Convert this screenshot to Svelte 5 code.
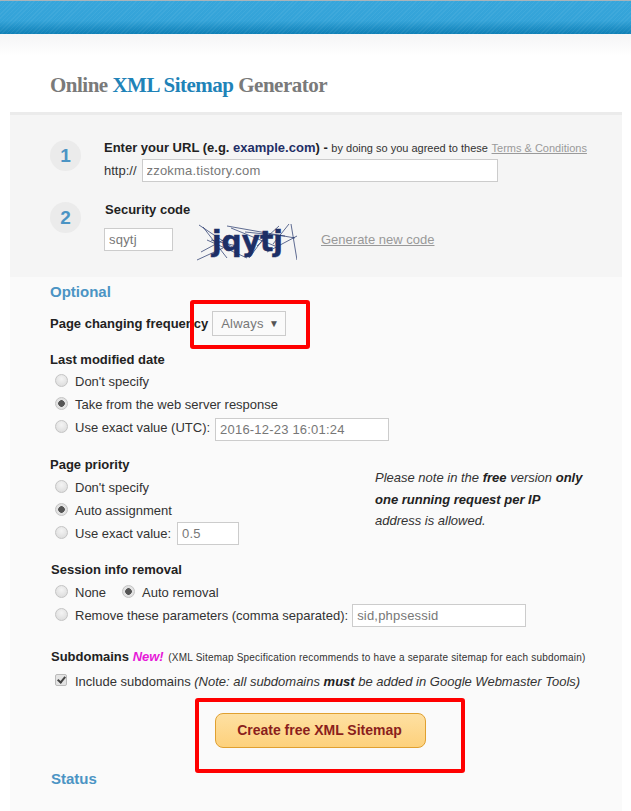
<script>
  let url = 'zzokma.tistory.com';
  let code = 'sqytj';
  let lastmod = '2016-12-23 16:01:24';
  let priority = '0.5';
  let params = 'sid,phpsessid';
  let freq = 'Always';

  const noise = [
    [2, 3, 38, 27], [6, 5, 30, 36], [4, 30, 30, 16], [0, 38, 26, 26], [14, 18, 40, 24],
    [30, 4, 98, 16], [34, 6, 78, 24], [48, 10, 88, 14], [60, 24, 82, 4], [76, 22, 92, 2],
    [94, 2, 100, 38], [52, 36, 70, 12], [10, 18, 28, 26], [28, 26, 50, 36], [70, 30, 100, 14]
  ];
</script>

<div class="page">
  <header class="topbar"></header>
  <div class="topfade"></div>

  <h1 class="title">Online <span>XML Sitemap</span> Generator</h1>

  <main class="panel">
    <section class="steps">
      <div class="step step-url">
        <div class="num">1</div>
        <div class="step-body">
          <div class="url-label">
            <b>Enter your URL (e.g. <span class="eg">example.com</span>) -</b>
            <small>by doing so you agreed to these</small>
            <a href="#terms" class="terms">Terms &amp; Conditions</a>
          </div>
          <div class="url-row">
            <span>http://</span>
            <input class="field url" bind:value={url} />
          </div>
        </div>
      </div>

      <div class="step step-code">
        <div class="num">2</div>
        <div class="step-body">
          <div class="code-label"><b>Security code</b></div>
          <div class="code-row">
            <input class="field code" bind:value={code} />
            <div class="captcha">
              <span>jqytj</span>
              <svg viewBox="0 0 100 40" width="100" height="40">
                {#each noise as n}
                  <line x1={n[0]} y1={n[1]} x2={n[2]} y2={n[3]} />
                {/each}
              </svg>
            </div>
            <a href="#new" class="newcode">Generate new code</a>
          </div>
        </div>
      </div>
    </section>

    <section class="options">
      <h2>Optional</h2>

      <div class="freq">
        <b>Page changing frequency</b>
        <div class="select"><span>{freq}</span><i>▼</i></div>
      </div>

      <h3>Last modified date</h3>
      <label class="row"><input type="radio" name="lm" /><span>Don't specify</span></label>
      <label class="row"><input type="radio" name="lm" checked /><span>Take from the web server response</span></label>
      <label class="row">
        <input type="radio" name="lm" /><span>Use exact value (UTC):</span>
        <input class="field stamp" bind:value={lastmod} />
      </label>

      <div class="priority">
        <div class="priority-left">
          <h3 class="gap">Page priority</h3>
          <label class="row"><input type="radio" name="pp" /><span>Don't specify</span></label>
          <label class="row"><input type="radio" name="pp" checked /><span>Auto assignment</span></label>
          <label class="row">
            <input type="radio" name="pp" /><span>Use exact value:</span>
            <input class="field prio" bind:value={priority} />
          </label>
        </div>
        <p class="note">Please note in the <b>free</b> version <b>only one running request per IP</b> address is allowed.</p>
      </div>

      <h3 class="gap shift">Session info removal</h3>
      <div class="row">
        <label class="inline"><input type="radio" name="si" /><span>None</span></label>
        <label class="inline"><input type="radio" name="si" checked /><span>Auto removal</span></label>
      </div>
      <label class="row">
        <input type="radio" name="si" /><span>Remove these parameters (comma separated):</span>
        <input class="field sess" bind:value={params} />
      </label>

      <div class="sub-head">
        <b>Subdomains</b> <em>New!</em>
        <small>(XML Sitemap Specification recommends to have a separate sitemap for each subdomain)</small>
      </div>
      <label class="row include">
        <input type="checkbox" checked />
        <span>Include subdomains <i>(Note: all subdomains <b>must</b> be added in Google Webmaster Tools)</i></span>
      </label>

      <div class="submit"><button type="button">Create free XML Sitemap</button></div>

      <h2 class="status">Status</h2>
    </section>
  </main>

  <!-- red annotations drawn on top of the screenshot -->
  <div class="mark mark-freq"></div>
  <div class="mark mark-btn"></div>
</div>

<style>
  :global(body) {
    margin: 0;
    background: #fff;
  }

  .page {
    position: relative;
    height: 811px;
    overflow: hidden;
    font-family: "Liberation Sans", Arial, sans-serif;
    font-size: 13px;
    color: #333;
  }

  .topbar {
    height: 33px;
    border-top: 1px solid #a9b4ba;
    background:
      repeating-linear-gradient(135deg, rgba(255, 255, 255, 0.05) 0 1px, transparent 1px 3px),
      linear-gradient(#37a6db 0, #34a3d8 60%, #0f80b6 100%);
  }

  .topfade {
    height: 22px;
    background: linear-gradient(#f5f5f6, #fff);
  }

  .title {
    margin: 0;
    padding: 16px 0 0 50px;
    height: 40px;
    font-family: "Liberation Serif", "Times New Roman", serif;
    font-size: 21px;
    line-height: 26px;
    font-weight: 700;
    letter-spacing: -0.5px;
    color: #7a7a7a;
  }

  .title span {
    color: #1f83b8;
  }

  .panel {
    margin: 0 9px 0 10px;
    border-top: 3px solid #ebebeb;
    background: #fafafa;
    height: 696px;
  }

  .steps {
    height: 162px;
    background: #f5f5f5;
    box-sizing: border-box;
    padding: 25px 0 0 40px;
  }

  .step {
    display: flex;
  }

  .step-code {
    margin-top: 20px;
  }

  .num {
    width: 31px;
    height: 31px;
    border-radius: 50%;
    background: #ebebeb;
    color: #4b94c4;
    font-size: 19px;
    font-weight: 700;
    line-height: 31px;
    text-align: center;
    flex: none;
  }

  .step-body {
    margin-left: 23px;
    margin-top: -2px;
  }

  .url-label {
    height: 18px;
    margin-top: 1px;
    line-height: 18px;
    font-size: 13px;
    white-space: nowrap;
    color: #222;
  }

  .eg {
    color: #1f2f66;
  }

  small {
    font-size: 11px;
    color: #333;
  }

  .terms {
    font-size: 11px;
    color: #9a9a9a;
  }

  .url-row {
    display: flex;
    align-items: center;
    gap: 5px;
    margin-top: 2px;
  }

  .field {
    box-sizing: border-box;
    height: 23px;
    border: 1px solid #ccc;
    background: #fff;
    padding: 0 4px;
    margin: 0;
    font-family: inherit;
    font-size: 13px;
    letter-spacing: 0.2px;
    color: #777;
    outline: none;
    border-radius: 0;
  }

  .url {
    width: 356px;
  }

  .code-label {
    height: 18px;
    margin-top: 1px;
    line-height: 18px;
    padding-left: 1px;
    color: #222;
  }

  .code-row {
    display: flex;
    align-items: flex-start;
    margin-top: 9px;
  }

  .code {
    width: 69px;
  }

  .captcha {
    position: relative;
    width: 100px;
    height: 40px;
    margin: -6px 0 0 24px;
    flex: none;
  }

  .captcha span {
    position: absolute;
    left: 15px;
    top: 4px;
    font-family: "DejaVu Sans", sans-serif;
    font-size: 28px;
    font-weight: 700;
    line-height: 32px;
    color: #1d2f66;
    -webkit-text-stroke: 0.5px #1d2f66;
  }

  .captcha svg {
    position: absolute;
    left: 0;
    top: 0;
  }

  .captcha line {
    stroke: #1d2f66;
    stroke-width: 0.7;
  }

  .newcode {
    margin: 4px 0 0 24px;
    font-size: 13px;
    color: #999;
    white-space: nowrap;
  }

  .options {
    padding: 6px 0 0 40px;
  }

  h2 {
    margin: 0;
    font-size: 15px;
    line-height: 18px;
    color: #4b94c4;
  }

  .freq {
    display: flex;
    align-items: center;
    gap: 4px;
    margin-top: 10px;
    height: 25px;
    color: #222;
  }

  .freq b,
  h3,
  .sub-head b {
    color: #222;
  }

  .select {
    box-sizing: border-box;
    width: 74px;
    height: 25px;
    border: 1px solid #ccc;
    display: flex;
    align-items: center;
    justify-content: space-between;
    padding: 0 6px 0 8px;
    color: #777;
    background: #fafafa;
    letter-spacing: 0.2px;
  }

  .select i {
    font-style: normal;
    font-size: 10px;
    color: #555;
  }

  h3 {
    margin: 15px 0 1px;
    font-size: 13px;
    line-height: 18px;
  }

  h3.gap {
    margin: 0 0 2px;
  }

  h3.shift {
    margin: 16px 0 2px 1px;
  }

  .row {
    display: flex;
    align-items: center;
    height: 23px;
    color: #333;
    white-space: nowrap;
  }

  .inline {
    display: flex;
    align-items: center;
    margin-right: 11px;
  }

  input[type="radio"] {
    appearance: none;
    width: 13px;
    height: 13px;
    margin: -3px 7px 0 5px;
    border-radius: 50%;
    border: 1px solid #c4c4c4;
    background: radial-gradient(circle at 50% 35%, #f4f4f4, #d8d8d8);
    flex: none;
  }

  input[type="radio"]:checked {
    background: radial-gradient(circle, #555 0 3px, #e2e2e2 3.6px);
  }

  .stamp {
    width: 174px;
    margin: 3px 0 0 5px;
  }

  .prio {
    width: 62px;
    margin: 0 0 0 6px;
  }

  .sess {
    width: 174px;
    margin: 0 0 0 4px;
  }

  .priority {
    display: flex;
    margin-top: 17px;
  }

  .priority-left {
    width: 325px;
    flex: none;
  }

  .note {
    margin: 11px 0 0;
    width: 212px;
    font-style: italic;
    line-height: 21.5px;
    color: #333;
  }

  .note b {
    color: #222;
  }

  .sub-head {
    margin: 21px 0 0 1px;
    height: 18px;
    line-height: 18px;
    white-space: nowrap;
  }

  .sub-head em {
    font-weight: 700;
    color: #e619d8;
  }

  .sub-head small {
    font-size: 10px;
    letter-spacing: 0.2px;
    margin-left: 1px;
    color: #333;
  }

  .include {
    margin-top: 4px;
  }

  input[type="checkbox"] {
    appearance: none;
    box-sizing: border-box;
    position: relative;
    width: 12px;
    height: 12px;
    margin: -3px 8px 0 5px;
    border: 1px solid #bbb;
    border-radius: 2px;
    background: #e4e4e4;
    flex: none;
  }

  input[type="checkbox"]::after {
    content: "";
    position: absolute;
    left: 3px;
    top: 0;
    width: 3px;
    height: 6px;
    border: solid #444;
    border-width: 0 2px 2px 0;
    transform: rotate(40deg);
  }

  .include b {
    color: #222;
  }

  .submit {
    margin: 20px 0 0 165px;
  }

  button {
    width: 211px;
    height: 35px;
    border: 1px solid #e0a030;
    border-radius: 8px;
    background: linear-gradient(#fee0a2, #fdd17c);
    color: #8b1f1c;
    font-family: inherit;
    font-size: 14px;
    font-weight: 700;
    padding: 0 2px 2px 0;
  }

  .status {
    margin: 22px 0 0 1px;
  }

  .mark {
    position: absolute;
    box-sizing: border-box;
    border: 4px solid #f00;
    border-radius: 3px;
  }

  .mark-freq {
    left: 190px;
    top: 300px;
    width: 120px;
    height: 49px;
  }

  .mark-btn {
    left: 195px;
    top: 698px;
    width: 270px;
    height: 75px;
  }
</style>
